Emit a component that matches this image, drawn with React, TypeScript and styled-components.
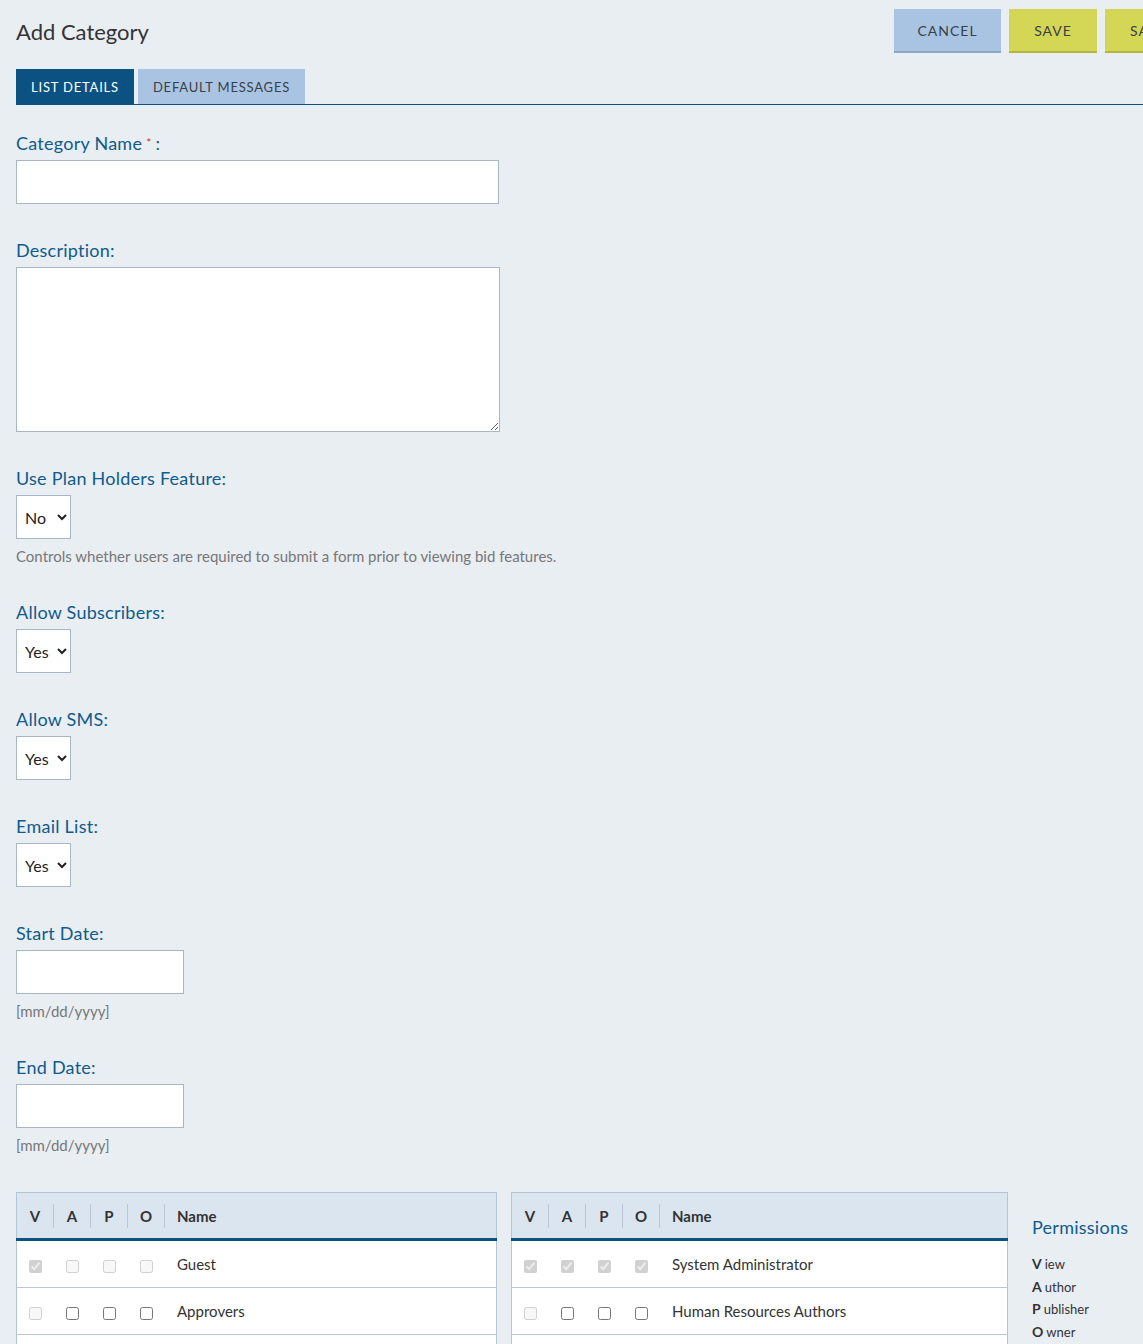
import React from 'react';
import styled, { createGlobalStyle } from 'styled-components';

const GlobalStyle = createGlobalStyle`
  html, body {
    margin: 0;
    padding: 0;
    background: #e9eef3;
    overflow-x: hidden;
  }
  body {
    font-family: Lato, "Noto Sans", "Liberation Sans", sans-serif;
    color: #333;
  }
`;

const Page = styled.div`
  padding: 0 0 40px 16px;
  width: 1180px;
`;

const TopBar = styled.div`
  display: flex;
  align-items: flex-start;
  justify-content: space-between;
  padding-top: 9px;
`;

const Title = styled.h1`
  margin: 9px 0 0;
  font-size: 22px;
  font-weight: 400;
  color: #333;
`;

const Actions = styled.div`
  display: flex;
  gap: 8px;
  margin-right: -65px;
`;

const ActionButton = styled.button<{ $variant: 'cancel' | 'save'; $width: number }>`
  width: ${({ $width }) => $width}px;
  height: 44px;
  padding: 0;
  border: none;
  border-bottom: 2px solid ${({ $variant }) => ($variant === 'cancel' ? '#8da8c6' : '#b4b543')};
  background: ${({ $variant }) => ($variant === 'cancel' ? '#a8c4e2' : '#d4d656')};
  color: #3a3f48;
  font-family: inherit;
  font-size: 14px;
  letter-spacing: 1px;
  text-transform: uppercase;
  cursor: pointer;
  white-space: nowrap;
`;

const Tabs = styled.div`
  display: flex;
  gap: 4px;
  margin-top: 16px;
  border-bottom: 1px solid #0b5283;
`;

const Tab = styled.div<{ $active?: boolean }>`
  height: 35px;
  display: flex;
  align-items: center;
  padding: 0 15px;
  background: ${({ $active }) => ($active ? '#0b5283' : '#a9c4e2')};
  color: ${({ $active }) => ($active ? '#fff' : '#3a3f48')};
  font-size: 13px;
  letter-spacing: 0.8px;
  text-transform: uppercase;
`;

const Form = styled.div`
  display: flex;
  flex-direction: column;
  padding-top: 26px;
`;

const Field = styled.div`
  display: flex;
  flex-direction: column;
  align-items: flex-start;
  margin-bottom: 34px;
`;

const Label = styled.label`
  font-size: 18px;
  line-height: 24px;
  letter-spacing: 0.25px;
  color: #0f5b8c;
  margin-bottom: 5px;
`;

const Required = styled.span`
  color: #c0392b;
  font-size: 12px;
  vertical-align: top;
  margin-left: 4px;
  margin-right: 4px;
`;

const TextInput = styled.input<{ $width: number }>`
  box-sizing: border-box;
  width: ${({ $width }) => $width}px;
  height: 44px;
  border: 1px solid #a9b6c6;
  background: #fff;
  font-family: inherit;
  font-size: 16px;
  padding: 0 10px;
  margin: 0;
`;

const TextArea = styled.textarea`
  box-sizing: border-box;
  width: 484px;
  height: 165px;
  border: 1px solid #a9b6c6;
  background: #fff;
  margin: 0;
  font-family: inherit;
`;

const Select = styled.select`
  box-sizing: border-box;
  width: 55px;
  height: 44px;
  border: 1px solid #a9b6c6;
  border-radius: 0;
  background: #fff;
  font-family: inherit;
  font-size: 16px;
  color: #222;
  padding: 0 2px 0 4px;
  margin: 0;
`;

const Help = styled.div`
  font-size: 15px;
  line-height: 20px;
  color: #777;
  margin-top: 7px;
`;

const Bottom = styled.div`
  display: flex;
  align-items: flex-start;
  gap: 14px;
  margin-top: 3px;
`;

const Table = styled.table<{ $width: number }>`
  width: ${({ $width }) => $width}px;
  border-collapse: collapse;
  border: 1px solid #b3c4d6;
  background: #fff;
`;

const HeadRow = styled.tr`
  background: #dbe5f0;
  border-bottom: 3px solid #0b5283;
`;

const Th = styled.th<{ $name?: boolean }>`
  height: 45px;
  padding: 0;
  width: ${({ $name }) => ($name ? 'auto' : '37px')};
  text-align: ${({ $name }) => ($name ? 'left' : 'center')};
  padding-left: ${({ $name }) => ($name ? '12px' : '0')};
  font-size: 15px;
  font-weight: 700;
  color: #333;
`;

const ThInner = styled.span<{ $divider?: boolean }>`
  display: block;
  line-height: 24px;
  border-right: ${({ $divider }) => ($divider ? '1px solid #b9c7d5' : 'none')};
`;

const Row = styled.tr`
  border-bottom: 1px solid #b9c7d5;
`;

const Td = styled.td<{ $name?: boolean }>`
  height: 46px;
  padding: 0;
  padding-left: ${({ $name }) => ($name ? '12px' : '0')};
  text-align: ${({ $name }) => ($name ? 'left' : 'center')};
  font-size: 15px;
  color: #333;
`;

const Check = styled.input`
  margin: 0;
  width: 13px;
  height: 13px;
  vertical-align: middle;
`;

const Legend = styled.div`
  padding-top: 24px;
  margin-left: 10px;
`;

const LegendTitle = styled.div`
  font-size: 18px;
  letter-spacing: 0.25px;
  color: #0f5b8c;
  margin-bottom: 15px;
`;

const LegendItem = styled.div`
  font-size: 13px;
  line-height: 22.5px;
  color: #333;
  b {
    font-weight: 700;
    font-size: 14px;
    margin-right: 3px;
  }
`;

type Perm = { checked: boolean; disabled: boolean };
type Group = { name: string; perms: Perm[] };

const left: Group[] = [
  {
    name: 'Guest',
    perms: [
      { checked: true, disabled: true },
      { checked: false, disabled: true },
      { checked: false, disabled: true },
      { checked: false, disabled: true },
    ],
  },
  {
    name: 'Approvers',
    perms: [
      { checked: false, disabled: true },
      { checked: false, disabled: false },
      { checked: false, disabled: false },
      { checked: false, disabled: false },
    ],
  },
  {
    name: '',
    perms: [],
  },
];

const right: Group[] = [
  {
    name: 'System Administrator',
    perms: [
      { checked: true, disabled: true },
      { checked: true, disabled: true },
      { checked: true, disabled: true },
      { checked: true, disabled: true },
    ],
  },
  {
    name: 'Human Resources Authors',
    perms: [
      { checked: false, disabled: true },
      { checked: false, disabled: false },
      { checked: false, disabled: false },
      { checked: false, disabled: false },
    ],
  },
  {
    name: '',
    perms: [],
  },
];

const PermTable: React.FC<{ rows: Group[]; width: number }> = ({ rows, width }) => (
  <Table $width={width}>
    <thead>
      <HeadRow>
        {['V', 'A', 'P', 'O'].map((l) => (
          <Th key={l}>
            <ThInner $divider>{l}</ThInner>
          </Th>
        ))}
        <Th $name>Name</Th>
      </HeadRow>
    </thead>
    <tbody>
      {rows.map((r, i) => (
        <Row key={i}>
          {[0, 1, 2, 3].map((j) => (
            <Td key={j}>
              {r.perms[j] && (
                <Check
                  type="checkbox"
                  checked={r.perms[j].checked}
                  disabled={r.perms[j].disabled}
                  readOnly
                />
              )}
            </Td>
          ))}
          <Td $name>{r.name}</Td>
        </Row>
      ))}
    </tbody>
  </Table>
);

const App: React.FC = () => (
  <>
    <GlobalStyle />
    <Page>
      <TopBar>
        <Title>Add Category</Title>
        <Actions>
          <ActionButton $variant="cancel" $width={107}>Cancel</ActionButton>
          <ActionButton $variant="save" $width={88}>Save</ActionButton>
          <ActionButton $variant="save" $width={156}>Save &amp; Close</ActionButton>
        </Actions>
      </TopBar>
      <Tabs>
        <Tab $active>List Details</Tab>
        <Tab>Default Messages</Tab>
      </Tabs>
      <Form>
        <Field>
          <Label>
            Category Name<Required>*</Required>:
          </Label>
          <TextInput $width={483} />
        </Field>
        <Field>
          <Label>Description:</Label>
          <TextArea />
        </Field>
        <Field>
          <Label>Use Plan Holders Feature:</Label>
          <Select defaultValue="No">
            <option>No</option>
            <option>Yes</option>
          </Select>
          <Help>Controls whether users are required to submit a form prior to viewing bid features.</Help>
        </Field>
        <Field>
          <Label>Allow Subscribers:</Label>
          <Select defaultValue="Yes">
            <option>Yes</option>
            <option>No</option>
          </Select>
        </Field>
        <Field>
          <Label>Allow SMS:</Label>
          <Select defaultValue="Yes">
            <option>Yes</option>
            <option>No</option>
          </Select>
        </Field>
        <Field>
          <Label>Email List:</Label>
          <Select defaultValue="Yes">
            <option>Yes</option>
            <option>No</option>
          </Select>
        </Field>
        <Field>
          <Label>Start Date:</Label>
          <TextInput $width={168} />
          <Help>[mm/dd/yyyy]</Help>
        </Field>
        <Field>
          <Label>End Date:</Label>
          <TextInput $width={168} />
          <Help>[mm/dd/yyyy]</Help>
        </Field>
      </Form>
      <Bottom>
        <PermTable rows={left} width={481} />
        <PermTable rows={right} width={497} />
        <Legend>
          <LegendTitle>Permissions</LegendTitle>
          <LegendItem>
            <b>V</b>iew
          </LegendItem>
          <LegendItem>
            <b>A</b>uthor
          </LegendItem>
          <LegendItem>
            <b>P</b>ublisher
          </LegendItem>
          <LegendItem>
            <b>O</b>wner
          </LegendItem>
        </Legend>
      </Bottom>
    </Page>
  </>
);

export default App;
